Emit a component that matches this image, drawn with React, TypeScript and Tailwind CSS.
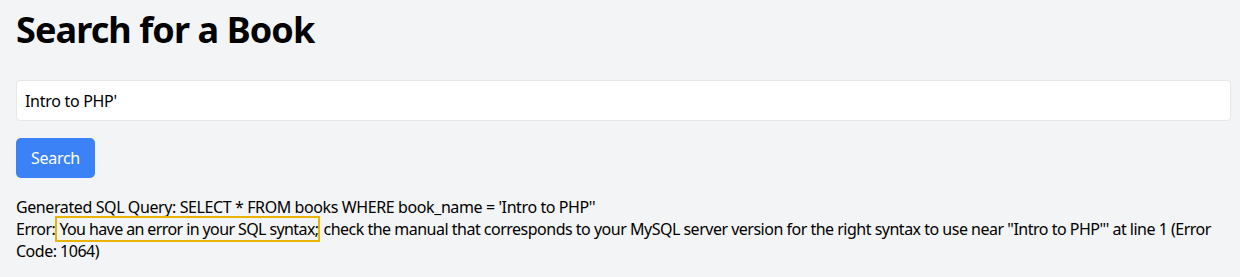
import React, { useState } from "react";

export default function App() {
  const [query, setQuery] = useState("Intro to PHP'");

  return (
    <div className="min-h-[277px] bg-[#f3f4f6] pl-4 pr-[9px] pt-[6px] text-black font-['Noto_Sans',sans-serif]">
      <h1 className="text-[36px] font-bold leading-[48px] tracking-[-0.9px]">Search for a Book</h1>

      <form className="mt-[26px] flex flex-col items-start" onSubmit={(e) => e.preventDefault()}>
        <input
          type="text"
          value={query}
          onChange={(e) => setQuery(e.target.value)}
          className="h-[41px] w-full rounded bg-white border border-[#e5e7eb] px-2 text-base tracking-[-0.3px] outline-none"
        />
        <button
          type="submit"
          className="mt-[17px] h-10 w-[79px] rounded-[5px] bg-[#3b82f6] text-base text-white tracking-[-0.3px]"
        >
          Search
        </button>
      </form>

      {/* Output */}
      <div className="mt-[18px] text-base leading-[22px] tracking-[-0.4px]">
        <p>Generated SQL Query: SELECT * FROM books WHERE book_name = 'Intro to PHP''</p>
        <p className="tracking-[-0.5px]">
          Error:<span className="mr-[3px] border-2 border-[#eab308] pl-[2px] tracking-[-0.6px]">You have an error in your SQL syntax;</span>check
          the manual that corresponds to your MySQL server version for the right syntax to use near ''Intro to
          PHP''' at line 1 (Error Code: 1064)
        </p>
      </div>
    </div>
  );
}
